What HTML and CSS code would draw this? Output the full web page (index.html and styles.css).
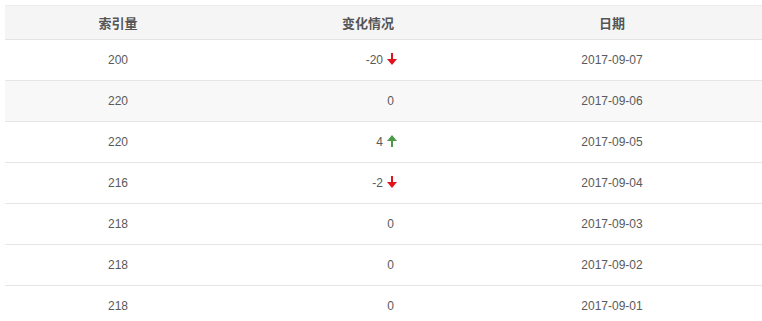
FILE: index.html
```html
<!DOCTYPE html>
<html lang="zh">
<head>
<meta charset="utf-8">
<link rel="stylesheet" href="styles.css">
</head>
<body>
<table class="tbl">
  <thead>
    <tr><th class="c1">索引量</th><th class="c2">变化情况</th><th class="c3">日期</th></tr>
  </thead>
  <tbody>
    <tr><td class="c1">200</td><td class="c2 num">-20<svg class="arr down" viewBox="0 0 10 12" width="10" height="12"><rect x="4" y="0" width="2" height="7"/><polygon points="0,6 10,6 5,12"/></svg></td><td class="c3">2017-09-07</td></tr>
    <tr class="alt"><td class="c1">220</td><td class="c2 num zero">0</td><td class="c3">2017-09-06</td></tr>
    <tr><td class="c1">220</td><td class="c2 num">4<svg class="arr up" viewBox="0 0 10 12" width="10" height="12"><rect x="4" y="5" width="2" height="7"/><polygon points="0,6 10,6 5,0"/></svg></td><td class="c3">2017-09-05</td></tr>
    <tr><td class="c1">216</td><td class="c2 num">-2<svg class="arr down" viewBox="0 0 10 12" width="10" height="12"><rect x="4" y="0" width="2" height="7"/><polygon points="0,6 10,6 5,12"/></svg></td><td class="c3">2017-09-04</td></tr>
    <tr><td class="c1">218</td><td class="c2 num zero">0</td><td class="c3">2017-09-03</td></tr>
    <tr><td class="c1">218</td><td class="c2 num zero">0</td><td class="c3">2017-09-02</td></tr>
    <tr><td class="c1">218</td><td class="c2 num zero">0</td><td class="c3">2017-09-01</td></tr>
  </tbody>
</table>
</body>
</html>
```
FILE: styles.css
```css
html, body { margin: 0; padding: 0; background: #fff; }
body { padding: 5px 0 0 5px; font-family: "Liberation Sans", Arial, "Noto Sans CJK SC", sans-serif; color: #555; }
.tbl { border-collapse: collapse; width: 757px; table-layout: fixed; border-top: 1px solid #ececec; }
.tbl th { background: #f5f5f5; height: 33px; font-size: 13px; font-weight: bold; color: #555; text-align: center; padding: 0; border-bottom: 1px solid #e3e3e3; }
.tbl td { height: 40px; font-size: 12px; color: #5a5a5a; text-align: center; padding: 0; border-bottom: 1px solid #e6e6e6; }
.tbl tr.alt td { background: #f8f8f8; }
.c1 { width: 226px; }
.c2 { width: 274px; }
.c3 { padding-right: 43px !important; }
.tbl td.num { text-align: right; padding-right: 108px; }
.tbl td.num.zero { padding-right: 111px; }
.arr { vertical-align: -1px; margin-left: 4px; }
.arr.down { fill: #e0141e; }
.arr.up { fill: #4a9a4a; }
```
